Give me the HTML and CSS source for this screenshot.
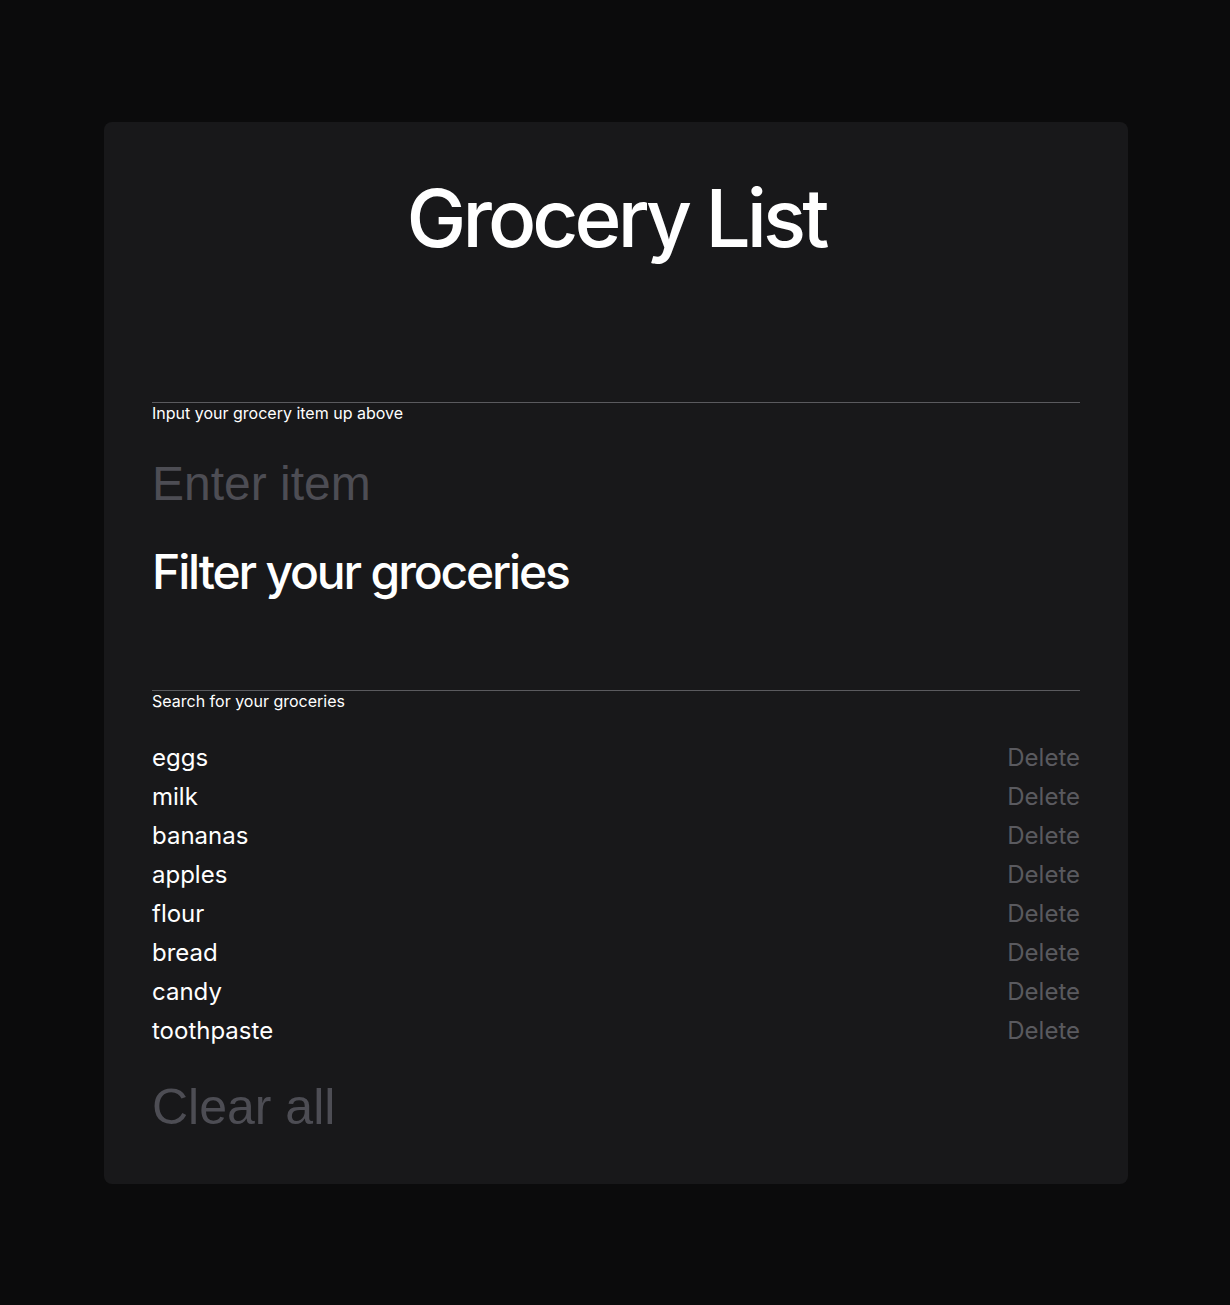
FILE: index.html
```html
<!DOCTYPE html>
<html>
<head>
<meta charset="utf-8">
<link rel="stylesheet" href="styles.css">
</head>
<body>
<main class="card">
  <h1 class="title">Grocery List</h1>
  <div class="field field-add">
    <div class="field-input"></div>
    <label class="field-label">Input your grocery item up above</label>
  </div>
  <button class="big-btn">Enter item</button>
  <h2 class="subtitle">Filter your groceries</h2>
  <div class="field field-filter">
    <div class="field-input"></div>
    <label class="field-label">Search for your groceries</label>
  </div>
  <ul class="list">
    <li class="row"><span>eggs</span><button class="del">Delete</button></li>
    <li class="row"><span>milk</span><button class="del">Delete</button></li>
    <li class="row"><span>bananas</span><button class="del">Delete</button></li>
    <li class="row"><span>apples</span><button class="del">Delete</button></li>
    <li class="row"><span>flour</span><button class="del">Delete</button></li>
    <li class="row"><span>bread</span><button class="del">Delete</button></li>
    <li class="row"><span>candy</span><button class="del">Delete</button></li>
    <li class="row"><span>toothpaste</span><button class="del">Delete</button></li>
  </ul>
  <button class="big-btn clear">Clear all</button>
</main>
</body>
</html>
```
FILE: styles.css
```css
html, body {
  margin: 0;
  padding: 0;
  background: #0b0b0c;
}
body {
  font-family: Inter, "Noto Sans", sans-serif;
  color: #ffffff;
  padding: 122px 102px 121px 104px;
}
.card {
  background: #18181a;
  border-radius: 8px;
  padding: 48px;
  display: flex;
  flex-direction: column;
}
.title {
  margin: 0;
  text-align: center;
  font-size: 80px;
  font-weight: 500;
  letter-spacing: -0.049em;
  line-height: 96px;
}
.field {
  display: flex;
  flex-direction: column;
}
.field-add { margin-top: 136px; }
.field-input {
  border-bottom: 1px solid #5a5a5e;
}
.field-label {
  font-size: 16px;
  line-height: 20px;
  margin-top: 0;
}
.big-btn {
  align-self: flex-start;
  background: none;
  border: 0;
  padding: 0;
  font-family: "Liberation Sans", Arial, sans-serif;
  font-size: 48px;
  line-height: 56px;
  color: #4d4d54;
  margin-top: 33px;
}
.subtitle {
  margin: 32px 0 0;
  font-size: 48px;
  font-weight: 500;
  letter-spacing: -0.045em;
  line-height: 56px;
}
.field-filter { margin-top: 90px; }
.list {
  list-style: none;
  margin: 27px 0 0;
  padding: 0;
}
.row {
  display: flex;
  justify-content: space-between;
  align-items: center;
  font-size: 24px;
  line-height: 39px;
}
.del {
  background: none;
  border: 0;
  padding: 0;
  font-family: Inter, sans-serif;
  font-size: 24px;
  color: #5a5a5f;
}
.clear {
  margin-top: 29px;
  font-size: 50px;
  line-height: 57px;
}
```
